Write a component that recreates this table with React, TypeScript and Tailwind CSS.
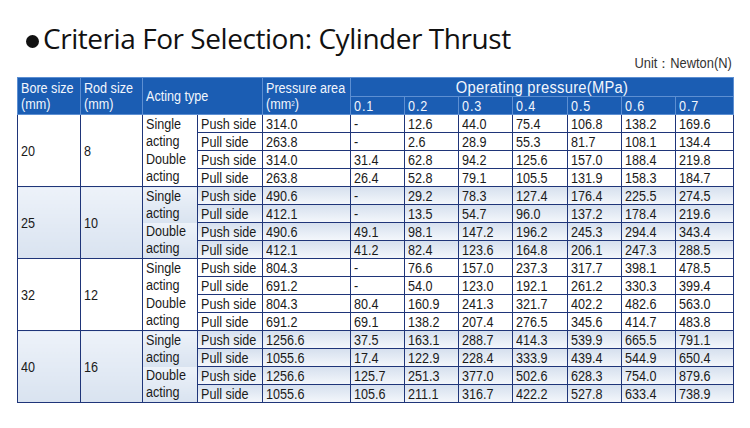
import React from 'react';

type Row = { side: string; area: string; vals: string[] };
type Group = { bore: string; rod: string; rows: Row[] };

const groups: Group[] = [
  {
    bore: '20',
    rod: '8',
    rows: [
      { side: 'Push side', area: '314.0', vals: ['-', '12.6', '44.0', '75.4', '106.8', '138.2', '169.6'] },
      { side: 'Pull side', area: '263.8', vals: ['-', '2.6', '28.9', '55.3', '81.7', '108.1', '134.4'] },
      { side: 'Push side', area: '314.0', vals: ['31.4', '62.8', '94.2', '125.6', '157.0', '188.4', '219.8'] },
      { side: 'Pull side', area: '263.8', vals: ['26.4', '52.8', '79.1', '105.5', '131.9', '158.3', '184.7'] },
    ],
  },
  {
    bore: '25',
    rod: '10',
    rows: [
      { side: 'Push side', area: '490.6', vals: ['-', '29.2', '78.3', '127.4', '176.4', '225.5', '274.5'] },
      { side: 'Pull side', area: '412.1', vals: ['-', '13.5', '54.7', '96.0', '137.2', '178.4', '219.6'] },
      { side: 'Push side', area: '490.6', vals: ['49.1', '98.1', '147.2', '196.2', '245.3', '294.4', '343.4'] },
      { side: 'Pull side', area: '412.1', vals: ['41.2', '82.4', '123.6', '164.8', '206.1', '247.3', '288.5'] },
    ],
  },
  {
    bore: '32',
    rod: '12',
    rows: [
      { side: 'Push side', area: '804.3', vals: ['-', '76.6', '157.0', '237.3', '317.7', '398.1', '478.5'] },
      { side: 'Pull side', area: '691.2', vals: ['-', '54.0', '123.0', '192.1', '261.2', '330.3', '399.4'] },
      { side: 'Push side', area: '804.3', vals: ['80.4', '160.9', '241.3', '321.7', '402.2', '482.6', '563.0'] },
      { side: 'Pull side', area: '691.2', vals: ['69.1', '138.2', '207.4', '276.5', '345.6', '414.7', '483.8'] },
    ],
  },
  {
    bore: '40',
    rod: '16',
    rows: [
      { side: 'Push side', area: '1256.6', vals: ['37.5', '163.1', '288.7', '414.3', '539.9', '665.5', '791.1'] },
      { side: 'Pull side', area: '1055.6', vals: ['17.4', '122.9', '228.4', '333.9', '439.4', '544.9', '650.4'] },
      { side: 'Push side', area: '1256.6', vals: ['125.7', '251.3', '377.0', '502.6', '628.3', '754.0', '879.6'] },
      { side: 'Pull side', area: '1055.6', vals: ['105.6', '211.1', '316.7', '422.2', '527.8', '633.4', '738.9'] },
    ],
  },
];

const pressures = ['0.1', '0.2', '0.3', '0.4', '0.5', '0.6', '0.7'];

// the printed table uses a condensed face, so squeeze the text a little
const Txt: React.FC<{ children: React.ReactNode }> = ({ children }) => (
  <span className="block whitespace-nowrap scale-x-[0.9] origin-left">{children}</span>
);

const App: React.FC = () => {
  return (
    <div className="w-[750px] h-[428px] bg-white overflow-hidden" style={{ fontFamily: '"Liberation Sans", Arial, sans-serif' }}>
      {/* title */}
      <div className="flex items-center h-[54px] pt-[22px] pl-[26px]">
        <span className="w-[13px] h-[13px] rounded-full bg-[#111] mt-[7px] mr-[4px]" />
        <h1
          className="text-[28px] leading-[32px] text-[#111] tracking-[-0.45px]"
          style={{ fontFamily: '"Open Sans", "Noto Sans", sans-serif' }}
        >
          Criteria For Selection: Cylinder Thrust
        </h1>
      </div>
      <div className="flex justify-end pr-[18px] h-[23px] pt-[1px] text-[14px] leading-[16px] text-[#333]">
        <span className="inline-block scale-x-[0.92] origin-right">Unit：Newton(N)</span>
      </div>

      <div className="pl-[17px]">
        <table className="table-fixed border-collapse w-[716px] text-[14px] text-[#1a1a1a] border border-[#1f3579]">
          <colgroup>
            <col className="w-[63px]" />
            <col className="w-[62px]" />
            <col className="w-[55px]" />
            <col className="w-[65px]" />
            <col className="w-[88px]" />
            <col className="w-[54px]" />
            <col className="w-[54px]" />
            <col className="w-[54px]" />
            <col className="w-[55px]" />
            <col className="w-[54px]" />
            <col className="w-[54px]" />
            <col className="w-[58px]" />
          </colgroup>
          <thead className="bg-[#1b5db3] text-[#f2f6fd]">
            <tr className="h-[19px]">
              <th rowSpan={2} className="border border-[#5d8fd2] text-left font-normal px-[3px] leading-[16px] align-middle">
                <Txt>Bore size</Txt>
                <Txt>(mm)</Txt>
              </th>
              <th rowSpan={2} className="border border-[#5d8fd2] text-left font-normal px-[3px] leading-[16px] align-middle">
                <Txt>Rod size</Txt>
                <Txt>(mm)</Txt>
              </th>
              <th rowSpan={2} colSpan={2} className="border border-[#5d8fd2] text-left font-normal px-[3px] leading-[16px] align-middle">
                <Txt>Acting type</Txt>
              </th>
              <th rowSpan={2} className="border border-[#5d8fd2] text-left font-normal px-[3px] leading-[16px] align-middle">
                <Txt>Pressure area</Txt>
                <Txt>
                  (mm<sup className="text-[7px]">2</sup>)
                </Txt>
              </th>
              <th colSpan={7} className="border border-[#5d8fd2] font-normal text-center text-[16px] leading-[17px] p-0">
                <span className="block whitespace-nowrap scale-x-[0.92] tracking-[0.3px]">Operating pressure(MPa)</span>
              </th>
            </tr>
            <tr className="h-[18px]">
              {pressures.map((p) => (
                <th key={p} className="border border-[#5d8fd2] text-left font-normal px-[3px] leading-[16px] tracking-[1px]">
                  <Txt>{p}</Txt>
                </th>
              ))}
            </tr>
          </thead>
          <tbody>
            {groups.map((g, gi) => {
              const shaded = gi % 2 === 1;
              const rowBg = shaded ? 'bg-gradient-to-b from-[#d6e0ee] to-[#f5f8fc]' : 'bg-white';
              const mergedBg = shaded ? 'bg-gradient-to-b from-[#edf2f9] to-[#d9e3f0]' : 'bg-white';
              return g.rows.map((r, ri) => (
                <tr key={`${gi}-${ri}`} className={`h-[18px] leading-[16px] ${rowBg}`}>
                  {ri === 0 && (
                    <>
                      <td rowSpan={4} className={`border border-[#1f3579] px-[3px] align-middle ${mergedBg}`}>
                        <Txt>{g.bore}</Txt>
                      </td>
                      <td rowSpan={4} className={`border border-[#1f3579] px-[3px] align-middle ${mergedBg}`}>
                        <Txt>{g.rod}</Txt>
                      </td>
                    </>
                  )}
                  {ri % 2 === 0 && (
                    <td
                      rowSpan={2}
                      className={`border-x border-[#1f3579] px-[3px] leading-[17px] align-middle ${mergedBg} ${ri === 0 ? 'border-t' : ''} ${ri === 2 ? 'border-b' : ''}`}
                    >
                      <Txt>{ri === 0 ? 'Single' : 'Double'}</Txt>
                      <Txt>acting</Txt>
                    </td>
                  )}
                  <td className="border border-[#1f3579] px-[3px]">
                    <Txt>{r.side}</Txt>
                  </td>
                  <td className="border border-[#1f3579] px-[3px]">
                    <Txt>{r.area}</Txt>
                  </td>
                  {r.vals.map((v, vi) => (
                    <td key={vi} className="border border-[#1f3579] px-[3px]">
                      <Txt>{v}</Txt>
                    </td>
                  ))}
                </tr>
              ));
            })}
          </tbody>
        </table>
      </div>
    </div>
  );
};

export default App;
